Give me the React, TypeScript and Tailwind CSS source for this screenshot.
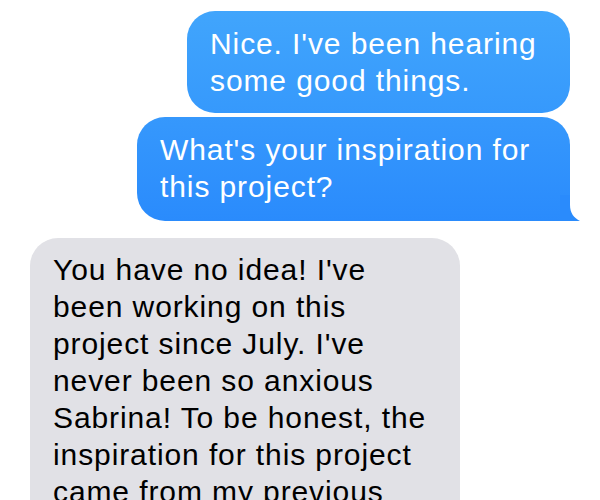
// iMessage-style conversation
const font = { fontFamily: '"Liberation Sans", Arial, sans-serif' };

export default function App() {
  return (
    <div
      className="w-[600px] h-[500px] overflow-hidden bg-white flex flex-col pt-[11px]"
      style={font}
    >
      {/* Sent */}
      <div className="flex flex-col items-end pr-[30px] gap-[4px]">
        <div className="w-[383px] h-[102px] rounded-[28px] bg-gradient-to-b from-[#41a5fc] to-[#3699fc] pl-[23px] pr-[16px] pt-[14px] text-white text-[30px] leading-[37px] tracking-[0.9px]">
          Nice. I've been hearing some good things.
        </div>
        <div className="relative w-[433px] h-[104px]">
          <div className="h-full rounded-[28px] rounded-br-[6px] bg-gradient-to-b from-[#3698fc] to-[#2a8bfc] pl-[23px] pr-[16px] pt-[14px] text-white text-[30px] leading-[37px] tracking-[0.9px]">
            What's your inspiration for this project?
          </div>
          {/* tail */}
          <svg
            className="absolute right-[-10px] bottom-0"
            width="20"
            height="26"
            viewBox="0 0 20 26"
          >
            <path
              d="M0 0 L10 0 L10 10 C10 18 14 23 20 26 L0 26 Z"
              fill="#2a8bfc"
            />
          </svg>
        </div>
      </div>

      {/* Received */}
      <div className="pl-[30px] mt-[17px]">
        <div className="w-[430px] rounded-[28px] bg-[#e1e1e6] pl-[23px] pr-[16px] pt-[13px] pb-[20px] text-black text-[30px] leading-[37px] tracking-[0.9px]">
          You have no idea! I've been working on this project since July. I've
          never been so anxious Sabrina! To be honest, the inspiration for this
          project came from my previous experience.
        </div>
      </div>
    </div>
  );
}
